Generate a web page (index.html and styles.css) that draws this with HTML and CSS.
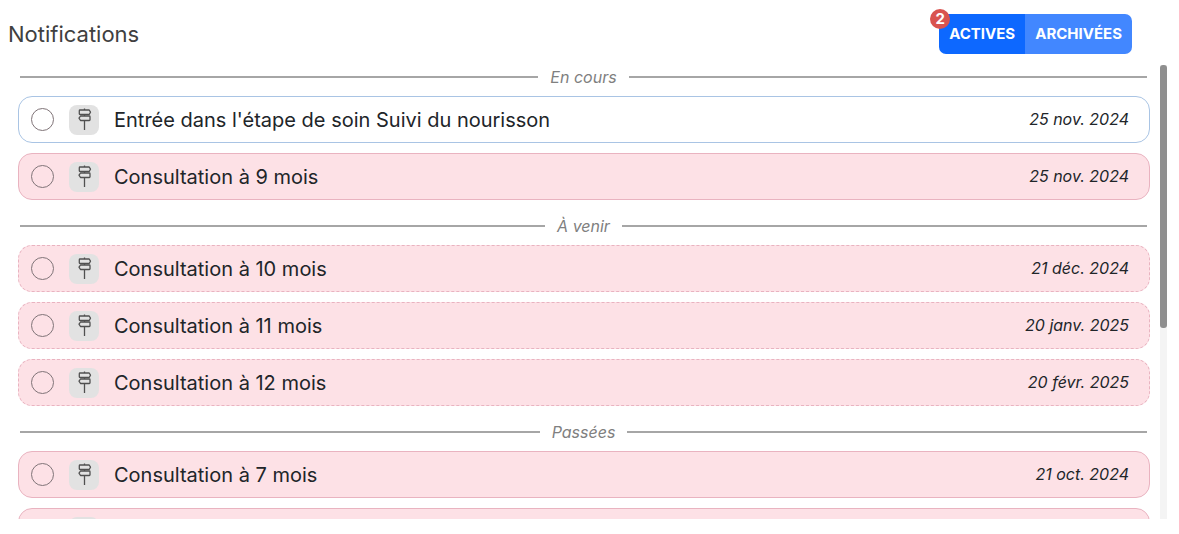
FILE: index.html
```
<!DOCTYPE html>
<html lang="fr">
<head>
<meta charset="utf-8">
<title>Notifications</title>
<link rel="stylesheet" href="styles.css">
</head>
<body>
  <svg class="defs" aria-hidden="true">
    <symbol id="signpost" viewBox="0 0 30 30">
      <path d="M15.5 3.500v1.500M15.5 9.500v1.500M15.5 15.500V25"/>
      <path d="M11 5h9.200l1.300 2.200-1.300 2.300H11q-.7 0-.7-.7V5.700q0-.7.7-.7z"/>
      <path d="M20.300 11h-8.800l-1.500 2.200 1.500 2.300h8.800q.7 0 .7-.7v-3.100q0-.7-.7-.7z"/>
    </symbol>
  </svg>
  <div id="panel">
    <header>
      <h1>Notifications</h1>
      <div class="tabs">
        <button type="button" class="active">ACTIVES</button><button type="button">ARCHIVÉES</button>
        <span class="badge">2</span>
      </div>
    </header>
    <div class="scroller">
      <main>
        <h2>En cours</h2>
        <ul>
          <li class="info">
            <input type="checkbox" id="n1">
            <svg class="icon"><use href="#signpost"/></svg>
            <label for="n1">Entrée dans l'étape de soin Suivi du nourisson</label>
            <time datetime="2024-11-25">25 nov. 2024</time>
          </li>
          <li>
            <input type="checkbox" id="n2">
            <svg class="icon"><use href="#signpost"/></svg>
            <label for="n2">Consultation à 9 mois</label>
            <time datetime="2024-11-25">25 nov. 2024</time>
          </li>
        </ul>
        <h2>À venir</h2>
        <ul class="upcoming">
          <li>
            <input type="checkbox" id="n3">
            <svg class="icon"><use href="#signpost"/></svg>
            <label for="n3">Consultation à 10 mois</label>
            <time datetime="2024-12-21">21 déc. 2024</time>
          </li>
          <li>
            <input type="checkbox" id="n4">
            <svg class="icon"><use href="#signpost"/></svg>
            <label for="n4">Consultation à 11 mois</label>
            <time datetime="2025-01-20">20 janv. 2025</time>
          </li>
          <li>
            <input type="checkbox" id="n5">
            <svg class="icon"><use href="#signpost"/></svg>
            <label for="n5">Consultation à 12 mois</label>
            <time datetime="2025-02-20">20 févr. 2025</time>
          </li>
        </ul>
        <h2>Passées</h2>
        <ul>
          <li>
            <input type="checkbox" id="n6">
            <svg class="icon"><use href="#signpost"/></svg>
            <label for="n6">Consultation à 7 mois</label>
            <time datetime="2024-10-21">21 oct. 2024</time>
          </li>
          <li>
            <input type="checkbox" id="n7" aria-label="Notification">
            <svg class="icon"><use href="#signpost"/></svg>
          </li>
        </ul>
      </main>
      <div class="track"><div class="thumb"></div></div>
    </div>
  </div>
</body>
</html>
```

FILE: styles.css
```
* {
  box-sizing: border-box;
}

body {
  margin: 0;
  background: #fff;
  color: #212529;
  font-family: Inter, "Open Sans", sans-serif;
}

.defs {
  display: none;
}

#panel {
  display: flex;
  flex-direction: column;
  height: 100vh;
  padding: 0 12px 15px 8px;
}

header {
  display: flex;
  flex: none;
  justify-content: space-between;
  align-items: flex-start;
  padding: 14px 35px 11px 0;
}

h1 {
  margin: 0;
  color: #404040;
  font-size: 22px;
  font-weight: 400;
  line-height: 40px;
}

.tabs {
  display: flex;
  position: relative;
}

.tabs button {
  height: 40px;
  padding: 0 10px;
  border: 0;
  background: #4287ff;
  color: #fff;
  font: bold 15px/40px Inter, sans-serif;
}

.tabs button:first-child {
  border-radius: 7px 0 0 7px;
}

.tabs button:nth-child(2) {
  border-radius: 0 7px 7px 0;
}

.tabs .active {
  background: #0d68ff;
}

.badge {
  position: absolute;
  top: -5px;
  left: -9px;
  width: 20px;
  height: 20px;
  border-radius: 50%;
  background: #d9534f;
  color: #fff;
  font-size: 15px;
  font-weight: bold;
  line-height: 20px;
  text-align: center;
}

.scroller {
  display: flex;
  flex: 1;
  gap: 10px;
  min-height: 0;
}

main {
  flex: 1;
  padding-left: 10px;
  overflow-y: auto;
  scrollbar-width: none;
}

h2 {
  display: flex;
  align-items: center;
  gap: 12px;
  margin: 14px 3px 7px 2px;
  color: #808080;
  font-size: 16px;
  font-style: italic;
  font-weight: 400;
  line-height: 24px;
}

h2:first-child {
  margin-top: 0;
}

h2::before, h2::after {
  content: "";
  flex: 1;
  height: 2px;
  background: #a6a6a6;
}

ul {
  display: flex;
  flex-direction: column;
  gap: 10px;
  margin: 0;
  padding: 0;
  list-style: none;
}

li {
  display: flex;
  align-items: center;
  gap: 15px;
  height: 47px;
  padding: 0 20px 0 12px;
  border: 1px solid #e9b3c0;
  border-radius: 14px;
  background: #fde1e6;
}

.info {
  border-color: #a9c4e4;
  background: #fff;
}

.upcoming li {
  border-style: dashed;
}

input {
  appearance: none;
  flex: none;
  width: 23px;
  height: 23px;
  margin: 0;
  border: 1px solid #807478;
  border-radius: 50%;
  background: #fff0;
}

input:checked {
  background: #807478;
}

.icon {
  flex: none;
  width: 30px;
  height: 30px;
  border-radius: 8px;
  background: #e2e2e2;
  fill: none;
  stroke: #505050;
  stroke-width: 1.3;
  stroke-linejoin: round;
}

label {
  flex: 1;
  font-size: 20px;
  line-height: 24px;
}

time {
  padding-bottom: 2px;
  font-size: 16px;
  font-style: italic;
  line-height: 24px;
}

.track {
  width: 7px;
  background: #f4f4f4;
}

.thumb {
  height: 58%;
  border-radius: 3px;
  background: #8f8f8f;
}
```
